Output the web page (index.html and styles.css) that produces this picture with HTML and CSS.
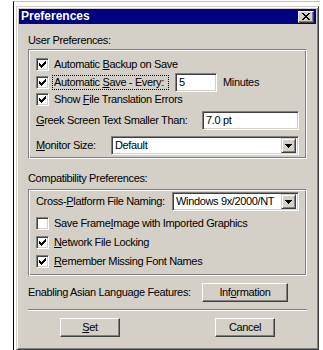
FILE: index.html
```html
<!DOCTYPE html>
<html lang="en">

<head>
  <meta charset="UTF-8">
  <title>Preferences</title>

  <link rel="stylesheet" href="styles.css">
</head>

<body>
  <div class="frame">
    <div class="dialog">
      <div class="titlebar">
        <span class="title">Preferences</span>
        <span class="close">
          <svg width="8" height="7" viewBox="0 0 8 7"><path d="M0 0h2v1H0z M6 0h2v1H6z M1 1h2v1H1z M5 1h2v1H5z M2 2h4v1H2z M3 3h2v1H3z M2 4h4v1H2z M1 5h2v1H1z M5 5h2v1H5z M0 6h2v1H0z M6 6h2v1H6z" fill="#000"/></svg>
        </span>
      </div>

      <div class="content">
        <div class="group-label">User Preferences:</div>
        <div class="group group-user">
          <div class="row r1">
            <span class="checkbox"><svg width="7" height="7" viewBox="0 0 7 7"><path d="M0 2h1v3H0z M1 3h1v3H1z M2 4h1v3H2z M3 3h1v3H3z M4 2h1v3H4z M5 1h1v3H5z M6 0h1v3H6z" fill="#000"/></svg></span>
            <span class="cb-text">Automatic <u>B</u>ackup on Save</span>
          </div>
          <div class="row r2">
            <span class="checkbox"><svg width="7" height="7" viewBox="0 0 7 7"><path d="M0 2h1v3H0z M1 3h1v3H1z M2 4h1v3H2z M3 3h1v3H3z M4 2h1v3H4z M5 1h1v3H5z M6 0h1v3H6z" fill="#000"/></svg></span>
            <span class="cb-text focus">Automatic <u>S</u>ave - Every:</span>
            <span class="field minutes">5</span>
            <span class="unit">Minutes</span>
          </div>
          <div class="row r3">
            <span class="checkbox"><svg width="7" height="7" viewBox="0 0 7 7"><path d="M0 2h1v3H0z M1 3h1v3H1z M2 4h1v3H2z M3 3h1v3H3z M4 2h1v3H4z M5 1h1v3H5z M6 0h1v3H6z" fill="#000"/></svg></span>
            <span class="cb-text">Show <u>F</u>ile Translation Errors</span>
          </div>
          <div class="row r4">
            <span class="label greek-label"><u>G</u>reek Screen Text Smaller Than:</span>
            <span class="field greek">7.0 pt</span>
          </div>
          <div class="row r5">
            <span class="label monitor-label"><u>M</u>onitor Size:</span>
            <span class="field combo monitor">
              <span class="combo-text">Default</span>
              <span class="arrow"><svg width="7" height="4" viewBox="0 0 7 4"><path d="M0 0h7v1H0z M1 1h5v1H1z M2 2h3v1H2z M3 3h1v1H3z" fill="#000"/></svg></span>
            </span>
          </div>
        </div>

        <div class="group-label compat-label">Compatibility Preferences:</div>
        <div class="group group-compat">
          <div class="row c1">
            <span class="label naming-label">Cross-<u>P</u>latform File Naming:</span>
            <span class="field combo naming">
              <span class="combo-text">Windows 9x/2000/NT</span>
              <span class="arrow"><svg width="7" height="4" viewBox="0 0 7 4"><path d="M0 0h7v1H0z M1 1h5v1H1z M2 2h3v1H2z M3 3h1v1H3z" fill="#000"/></svg></span>
            </span>
          </div>
          <div class="row c2">
            <span class="checkbox"></span>
            <span class="cb-text">Save Frame<u>I</u>mage with Imported Graphics</span>
          </div>
          <div class="row c2">
            <span class="checkbox"><svg width="7" height="7" viewBox="0 0 7 7"><path d="M0 2h1v3H0z M1 3h1v3H1z M2 4h1v3H2z M3 3h1v3H3z M4 2h1v3H4z M5 1h1v3H5z M6 0h1v3H6z" fill="#000"/></svg></span>
            <span class="cb-text"><u>N</u>etwork File Locking</span>
          </div>
          <div class="row c2">
            <span class="checkbox"><svg width="7" height="7" viewBox="0 0 7 7"><path d="M0 2h1v3H0z M1 3h1v3H1z M2 4h1v3H2z M3 3h1v3H3z M4 2h1v3H4z M5 1h1v3H5z M6 0h1v3H6z" fill="#000"/></svg></span>
            <span class="cb-text"><u>R</u>emember Missing Font Names</span>
          </div>
        </div>

        <div class="row asian">
          <span class="label asian-label">Enabling Asian Language Features:</span>
          <span class="btn info">Inf<u>o</u>rmation</span>
        </div>

        <div class="separator"></div>

        <div class="row actions">
          <span class="btn set"><u>S</u>et</span>
          <span class="btn cancel">Cancel</span>
        </div>
      </div>
    </div>
  </div>
</body>

</html>
```

FILE: styles.css
```css
body {
  margin: 0;
  background: #fff;
  color: #000;
  font-family: 'Liberation Sans', Arial, sans-serif;
  font-size: 11px;
  line-height: 13px;
  letter-spacing: -0.35px;
}

.frame {
  margin: 1px 0 0 13px;
  width: 306px;
  height: 349px;
  border-left: 1px solid #000;
  border-top: 1px solid #c0c0c0;
}

.dialog {
  box-sizing: border-box;
  width: 303px;
  height: 344px;
  margin: 4px 0 0 2px;
  padding: 2px;
  background: #d4d0c8;
  border: 1px solid;
  border-color: #d4d0c8 #404040 #404040 #d4d0c8;
  box-shadow: inset 1px 1px #fff, inset -1px -1px #808080;
}

.titlebar {
  height: 15px;
  padding: 0 2px;
  background: #000080;
  color: #fff;
  display: flex;
  align-items: center;
  justify-content: space-between;
}

.title {
  font-size: 12px;
  font-weight: bold;
  letter-spacing: 0;
}

.close {
  box-sizing: border-box;
  width: 16px;
  height: 12px;
  background: #d4d0c8;
  border: 1px solid;
  border-color: #fff #404040 #404040 #fff;
  box-shadow: inset -1px -1px #808080;
  display: flex;
  align-items: center;
  justify-content: center;
}

.close svg,
.checkbox svg,
.arrow svg {
  display: block;
  shape-rendering: crispEdges;
}

.content {
  padding: 10px 9px 0;
}

.group-label {
  height: 13px;
}

.compat-label {
  margin-top: 13px;
}

.group {
  margin-top: 2px;
  border: 1px solid;
  border-color: #808080 #fff #fff #808080;
  box-shadow: inset 1px 1px #fff, inset -1px -1px #808080;
  padding: 1px 7px;
}

.group-compat {
  margin-top: 4px;
}

.row {
  display: flex;
  align-items: center;
  white-space: nowrap;
}

.group-user {
  padding-top: 5px;
  padding-bottom: 3px;
}

.r1,
.r2 {
  height: 18px;
}

.r3 {
  height: 17px;
}

.r4 {
  height: 19px;
  margin-top: 3px;
}

.r5 {
  height: 19px;
  margin-top: 6px;
}

.group-compat {
  padding-top: 2px;
  padding-bottom: 4px;
}

.c1 {
  height: 19px;
  margin-bottom: 3px;
}

.c2 {
  height: 19px;
}

.checkbox {
  box-sizing: border-box;
  width: 13px;
  height: 13px;
  flex: none;
  background: #fff;
  border: 1px solid;
  border-color: #808080 #fff #fff #808080;
  box-shadow: inset 1px 1px #404040, inset -1px -1px #d4d0c8;
  display: flex;
  align-items: center;
  justify-content: center;
}

.cb-text {
  margin-left: 3px;
  padding: 0 1px;
  border: 1px solid transparent;
}

.focus {
  padding-right: 4px;
  border: 1px dotted #000;
}

.field {
  box-sizing: border-box;
  height: 19px;
  background: #fff;
  border: 1px solid;
  border-color: #808080 #fff #fff #808080;
  box-shadow: inset 1px 1px #404040, inset -1px -1px #d4d0c8;
  padding: 2px 3px;
  display: flex;
  align-items: center;
}

.minutes {
  width: 42px;
  margin-left: 6px;
}

.unit {
  margin-left: 6px;
}

.label {
  flex: none;
}

.greek-label {
  width: 166px;
}

.greek {
  width: 100px;
}

.monitor-label {
  width: 75px;
}

.monitor {
  width: 191px;
}

.naming-label {
  width: 136px;
}

.naming {
  width: 130px;
}

.combo {
  padding: 2px 2px 2px 3px;
  justify-content: space-between;
}

.combo-text {
  white-space: nowrap;
}

.arrow {
  box-sizing: border-box;
  width: 15px;
  height: 15px;
  flex: none;
  background: #d4d0c8;
  border: 1px solid;
  border-color: #d4d0c8 #404040 #404040 #d4d0c8;
  box-shadow: inset 1px 1px #fff, inset -1px -1px #808080;
  display: flex;
  align-items: center;
  justify-content: center;
}

.asian {
  height: 19px;
  margin-top: 7px;
}

.asian-label {
  width: 174px;
}

.btn {
  box-sizing: border-box;
  height: 19px;
  background: #d4d0c8;
  border: 1px solid;
  border-color: #fff #404040 #404040 #fff;
  box-shadow: inset -1px -1px #808080;
  display: flex;
  align-items: center;
  justify-content: center;
}

.info {
  width: 86px;
}

.separator {
  margin-top: 7px;
  height: 0;
  border-top: 1px solid #808080;
  border-bottom: 1px solid #fff;
}

.actions {
  margin-top: 7px;
  padding-left: 32px;
  gap: 95px;
}

.set,
.cancel {
  width: 60px;
}
```
